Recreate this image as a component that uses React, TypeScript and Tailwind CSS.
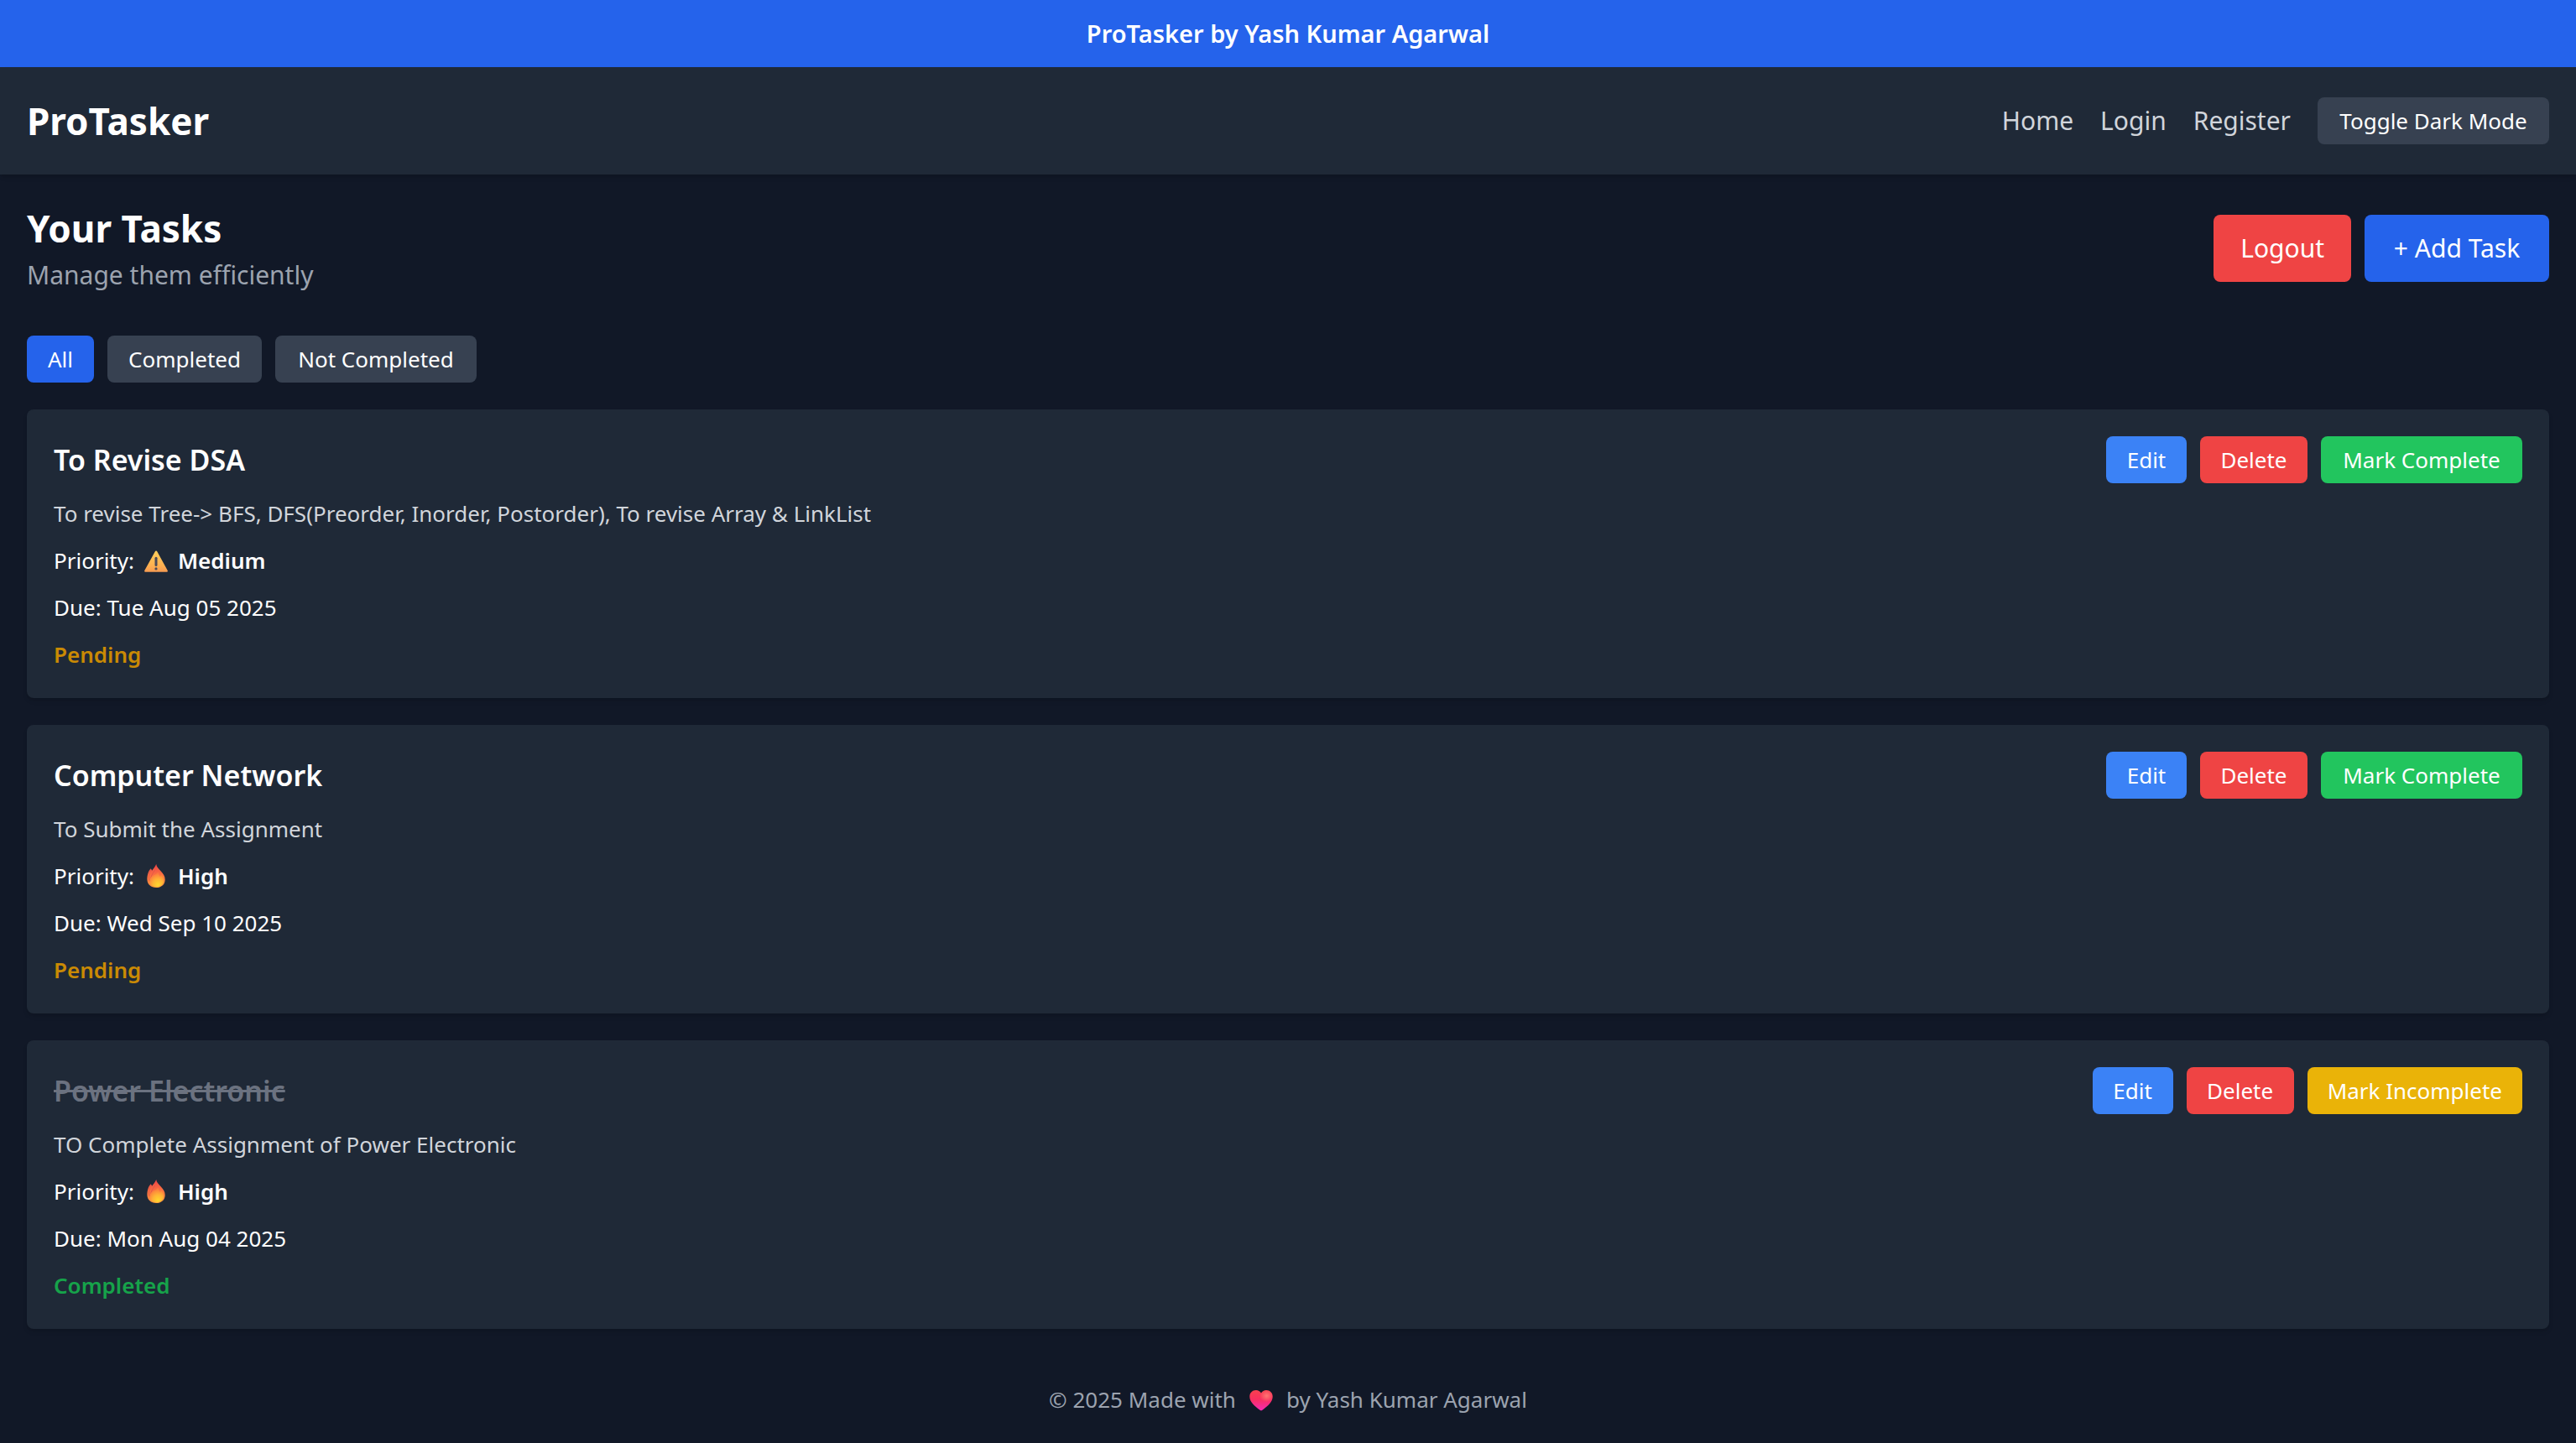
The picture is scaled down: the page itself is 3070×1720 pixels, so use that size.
import { useState } from "react";

type Task = {
  title: string;
  description: string;
  priority: "Medium" | "High";
  due: string;
  done: boolean;
};

const initialTasks: Task[] = [
  {
    title: "To Revise DSA",
    description:
      "To revise Tree-> BFS, DFS(Preorder, Inorder, Postorder), To revise Array & LinkList",
    priority: "Medium",
    due: "Tue Aug 05 2025",
    done: false,
  },
  {
    title: "Computer Network",
    description: "To Submit the Assignment",
    priority: "High",
    due: "Wed Sep 10 2025",
    done: false,
  },
  {
    title: "Power Electronic",
    description: "TO Complete Assignment of Power Electronic",
    priority: "High",
    due: "Mon Aug 04 2025",
    done: true,
  },
];

type Filter = "All" | "Completed" | "Not Completed";

const filters: { name: Filter; width: string }[] = [
  { name: "All", width: "min-w-20" },
  { name: "Completed", width: "min-w-46" },
  { name: "Not Completed", width: "min-w-60" },
];

function WarningIcon() {
  return (
    <svg viewBox="0 0 28 28" className="size-7" aria-hidden="true">
      <defs>
        <linearGradient id="warning-fill" x1="0" y1="0" x2="0" y2="1">
          <stop offset="0" stopColor="#ffcf5c" />
          <stop offset="0.7" stopColor="#ffb050" />
          <stop offset="1" stopColor="#f59a52" />
        </linearGradient>
      </defs>
      <path
        d="M12.9 3.2a1.3 1.3 0 0 1 2.3 0L27.7 26a1.2 1.2 0 0 1-1.1 1.8H1.4A1.2 1.2 0 0 1 .3 26Z"
        fill="url(#warning-fill)"
      />
      <path d="M14 11.200v8.400" stroke="#4b4a58" strokeWidth="3" strokeLinecap="round" />
      <circle cx="14" cy="23.900" r="1.6" fill="#4b4a58" />
    </svg>
  );
}

function FireIcon() {
  return (
    <svg viewBox="0 0 28 28" className="size-7" aria-hidden="true">
      <defs>
        <linearGradient id="fire-outer" x1="0.5" y1="0" x2="0.6" y2="1">
          <stop offset="0" stopColor="#ee4348" />
          <stop offset="0.5" stopColor="#fb7440" />
          <stop offset="1" stopColor="#ff9a3c" />
        </linearGradient>
        <radialGradient id="fire-inner" cx="0.6" cy="0.85" r="0.75">
          <stop offset="0" stopColor="#ffd72e" />
          <stop offset="0.5" stopColor="#ffb335" />
          <stop offset="1" stopColor="#fc7a3e" />
        </radialGradient>
      </defs>
      <path
        d="M14.2 0c.3 3.300 2.800 5.300 5.600 8.600 2.700 3.100 4.900 5.800 4.900 9.800 0 5.900-4.600 9.600-10.600 9.600S3.400 24 3.400 18.200c0-4.700 1.300-10.300 4.400-13 .5 1.100.8 1.700 1.300 2.500C10.800 5.500 12.900 3.200 14.200 0Z"
        fill="url(#fire-outer)"
      />
      <path
        d="M8 6.500C5.600 10 4.800 15 6 19.500M12.400 7.500C9.800 11 7.200 15.500 7 20"
        stroke="#d9534a"
        strokeWidth="1"
        fill="none"
        strokeLinecap="round"
        opacity="0.7"
      />
      <path
        d="M16.300 9.500c.9 2.100 1.500 3.600 2.700 5.500.5-.8.8-1.500 1-2.400 2 2.300 3 4.300 3 6.800 0 4.600-3.800 7.800-8.600 7.800-4.600 0-8-2.900-8-7 0-3.400 2-5.500 5-7 2.200-1.100 3.900-2 4.900-3.700Z"
        fill="url(#fire-inner)"
      />
    </svg>
  );
}

function HeartIcon() {
  return (
    <svg viewBox="0 0 28 28" className="size-7" aria-label="love" role="img">
      <defs>
        <linearGradient id="heart-fill" x1="0" y1="0" x2="0" y2="1">
          <stop offset="0" stopColor="#f8414f" />
          <stop offset="0.45" stopColor="#f92f60" />
          <stop offset="1" stopColor="#f32bb4" />
        </linearGradient>
        <radialGradient id="heart-shine" cx="0.74" cy="0.28" r="0.3">
          <stop offset="0" stopColor="#ff7672" />
          <stop offset="1" stopColor="#ff7672" stopOpacity="0" />
        </radialGradient>
      </defs>
      <path
        d="M14 6.500C12.600 4.200 10.500 3 7.900 3 3.600 3 .3 6.200.3 10.700c0 6.100 5.700 11.200 12.300 16a2.300 2.300 0 0 0 2.800 0c6.600-4.800 12.300-9.900 12.300-16C27.700 6.200 24.400 3 20.100 3 17.500 3 15.400 4.200 14 6.500Z"
        fill="url(#heart-fill)"
      />
      <path
        d="M14 6.500C12.600 4.200 10.500 3 7.900 3 3.600 3 .3 6.200.3 10.700c0 6.100 5.700 11.200 12.300 16a2.300 2.300 0 0 0 2.800 0c6.600-4.800 12.300-9.900 12.300-16C27.700 6.200 24.400 3 20.100 3 17.500 3 15.400 4.200 14 6.500Z"
        fill="url(#heart-shine)"
      />
    </svg>
  );
}

function TaskCard({ task, onToggle }: { task: Task; onToggle: () => void }) {
  return (
    <li className="flex items-start justify-between rounded-lg bg-[#1f2937] p-8 shadow-md">
      <div className="flex flex-col gap-4 text-[26px] leading-10">
        <h2
          className={
            task.done
              ? "text-[34px] leading-14 font-semibold text-[#6b7280] line-through"
              : "text-[34px] leading-14 font-semibold"
          }
        >
          {task.title}
        </h2>
        <p className="text-[#d1d5db]">{task.description}</p>
        <p className="flex items-center">
          Priority:
          <span className="mx-3">
            {task.priority === "High" ? <FireIcon /> : <WarningIcon />}
          </span>
          <strong className="font-semibold">{task.priority}</strong>
        </p>
        <p>Due: {task.due}</p>
        <p
          className={
            task.done ? "font-semibold text-[#16a34a]" : "font-semibold text-[#ca8a04]"
          }
        >
          {task.done ? "Completed" : "Pending"}
        </p>
      </div>
      <div className="flex gap-4 text-[26px] leading-10">
        <button type="button" className="min-w-24 rounded-lg bg-[#3b82f6] px-6 py-2">
          Edit
        </button>
        <button type="button" className="min-w-32 rounded-lg bg-[#ef4444] px-6 py-2">
          Delete
        </button>
        <button
          type="button"
          onClick={onToggle}
          className={
            task.done
              ? "min-w-60 rounded-lg bg-[#eab308] px-6 py-2"
              : "min-w-60 rounded-lg bg-[#22c55e] px-6 py-2"
          }
        >
          {task.done ? "Mark Incomplete" : "Mark Complete"}
        </button>
      </div>
    </li>
  );
}

export default function App() {
  const [tasks, setTasks] = useState(initialTasks);
  const [filter, setFilter] = useState<Filter>("All");

  const toggle = (title: string) =>
    setTasks(tasks.map((t) => (t.title === title ? { ...t, done: !t.done } : t)));

  const visible = tasks.filter(
    (t) => filter === "All" || (filter === "Completed" ? t.done : !t.done),
  );

  return (
    <div className="flex min-h-screen flex-col bg-[#111827] font-['Noto_Sans',sans-serif] text-[30px] leading-12 text-white">
      <div className="bg-[#2563eb] py-4 text-center text-[29px] font-semibold">
        ProTasker by Yash Kumar Agarwal
      </div>

      <header className="flex items-center justify-between bg-[#1f2937] p-8 shadow-md">
        <h1 className="text-[44px] leading-16 font-bold">ProTasker</h1>
        <nav className="flex items-center gap-8 text-[#d1d5db]">
          <a href="#home">Home</a>
          <a href="#login">Login</a>
          <a href="#register">Register</a>
          <button
            type="button"
            className="min-w-69 rounded-lg bg-[#374151] px-6 py-2 text-[26px] leading-10 text-white"
          >
            Toggle Dark Mode
          </button>
        </nav>
      </header>

      <main className="grow p-8">
        <div className="mb-12 flex items-center justify-between">
          <div>
            <h2 className="text-[44px] leading-16 font-bold">Your Tasks</h2>
            <p className="text-[#9ca3af]">Manage them efficiently</p>
          </div>
          <div className="flex gap-4">
            <button type="button" className="rounded-lg bg-[#ef4444] px-8 py-4">
              Logout
            </button>
            <button type="button" className="min-w-55 rounded-lg bg-[#2563eb] px-8 py-4">
              + Add Task
            </button>
          </div>
        </div>

        <div className="mb-8 flex gap-4 text-[26px] leading-10">
          {filters.map(({ name, width }) => (
            <button
              key={name}
              type="button"
              aria-pressed={name === filter}
              onClick={() => setFilter(name)}
              className={`rounded-lg px-6 py-2 ${width} ${
                name === filter ? "bg-[#2563eb]" : "bg-[#374151]"
              }`}
            >
              {name}
            </button>
          ))}
        </div>

        <ul className="flex flex-col gap-8">
          {visible.map((task) => (
            <TaskCard key={task.title} task={task} onToggle={() => toggle(task.title)} />
          ))}
        </ul>
      </main>

      <footer className="flex items-center justify-center p-8 text-[26px] leading-10 text-[#9ca3af]">
        © 2025 Made with
        <span className="mx-4">
          <HeartIcon />
        </span>
        by Yash Kumar Agarwal
      </footer>
    </div>
  );
}
